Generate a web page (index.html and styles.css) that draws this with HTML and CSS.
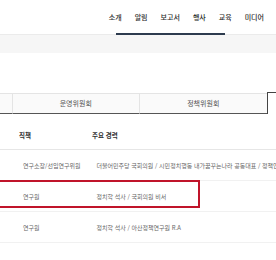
FILE: index.html
```html
<!DOCTYPE html>
<html lang="ko">
<head>
  <meta charset="UTF-8">
  <meta name="viewport" content="width=device-width, initial-scale=1.0">
  <title>연구진 소개</title>
  <link rel="stylesheet" href="styles.css">
</head>
<body>
  <header class="gnb">
    <ul class="gnb-menu">
      <li>소개</li>
      <li>알림</li>
      <li>보고서</li>
      <li>행사</li>
      <li>교육</li>
      <li>미디어</li>
    </ul>
    <span class="gnb-bar"></span>
  </header>
  <div class="sub-band"></div>

  <div class="content">
    <ul class="tabs">
      <li>연구진</li>
      <li>운영위원회</li>
      <li>정책위원회</li>
      <li class="active">자문위원회</li>
    </ul>

    <div class="board">
      <table>
        <thead>
          <tr>
            <th class="col-pos">직책</th>
            <th class="col-career">주요 경력</th>
          </tr>
        </thead>
        <tbody>
          <tr>
            <td class="col-pos">연구소장/선임연구위원</td>
            <td class="col-career">더불어민주당 국회의원 / 시민정치행동 내가꿈꾸는나라 공동대표 / 정책연구원 이사</td>
          </tr>
          <tr>
            <td class="col-pos">연구원</td>
            <td class="col-career">정치학 석사 / 국회의원 비서</td>
          </tr>
          <tr>
            <td class="col-pos">연구원</td>
            <td class="col-career">정치학 석사 / 아산정책연구원 R.A</td>
          </tr>
        </tbody>
      </table>
      <div class="highlight"></div>
    </div>
  </div>
</body>
</html>
```

FILE: styles.css
```css
body {
  margin: 0;
  font-family: "Noto Sans CJK KR", "Noto Sans", sans-serif;
  background-color: white;
  color: #333;
  overflow: hidden;
}
ul {
  list-style: none;
  margin: 0;
  padding: 0;
}
.gnb {
  position: relative;
  height: 34px;
  border-bottom: 1px solid #ebebeb;
  display: flex;
  justify-content: flex-end;
  align-items: center;
  padding-right: 12px;
}
.gnb-menu {
  display: flex;
  gap: 13px;
}
.gnb-menu li {
  font-size: 7px;
  line-height: 1;
  font-weight: 500;
  color: #2b2b2b;
}
.gnb-bar {
  position: absolute;
  left: 116px;
  top: 33px;
  width: 109px;
  height: 2px;
  background-color: #2d3b4e;
}
.sub-band {
  height: 18px;
  background-color: #f6f6f6;
}
.content {
  padding-top: 39px;
}
.tabs {
  display: flex;
  align-items: flex-end;
  height: 22px;
  margin-left: -115px;
}
.tabs li {
  flex: none;
  width: 126.5px;
  height: 19px;
  box-sizing: content-box;
  border-top: 1px solid #e4e4e4;
  border-right: 1px solid #e4e4e4;
  border-bottom: 1px solid #555;
  background-color: #fafafa;
  font-size: 7px;
  line-height: 19px;
  text-align: center;
  color: #555;
}
.tabs li:nth-child(3) {
  border-right: none;
}
.tabs li.active {
  height: 21px;
  border: 1px solid #444;
  border-bottom: none;
  background-color: white;
  color: #222;
}
.board {
  position: relative;
  padding-top: 6px;
}
table {
  border-collapse: collapse;
  table-layout: fixed;
  width: 100%;
}
th, td {
  text-align: left;
  white-space: nowrap;
  padding: 0;
}
th {
  height: 29px;
  border-bottom: 1px solid #e6e6e6;
  font-size: 6.5px;
  font-weight: 700;
  color: #333;
}
td {
  height: 30px;
  border-bottom: 1px solid #f1f1f1;
  font-size: 6px;
  color: #666;
  overflow: hidden;
}
th.col-pos {
  width: 73px;
  padding-left: 19px;
}
td.col-pos {
  padding-left: 23px;
}
td.col-career {
  padding-left: 4.5px;
}
.highlight {
  position: absolute;
  left: -10px;
  top: 66px;
  width: 206px;
  height: 24px;
  border: 2px solid #c0142a;
}
```
